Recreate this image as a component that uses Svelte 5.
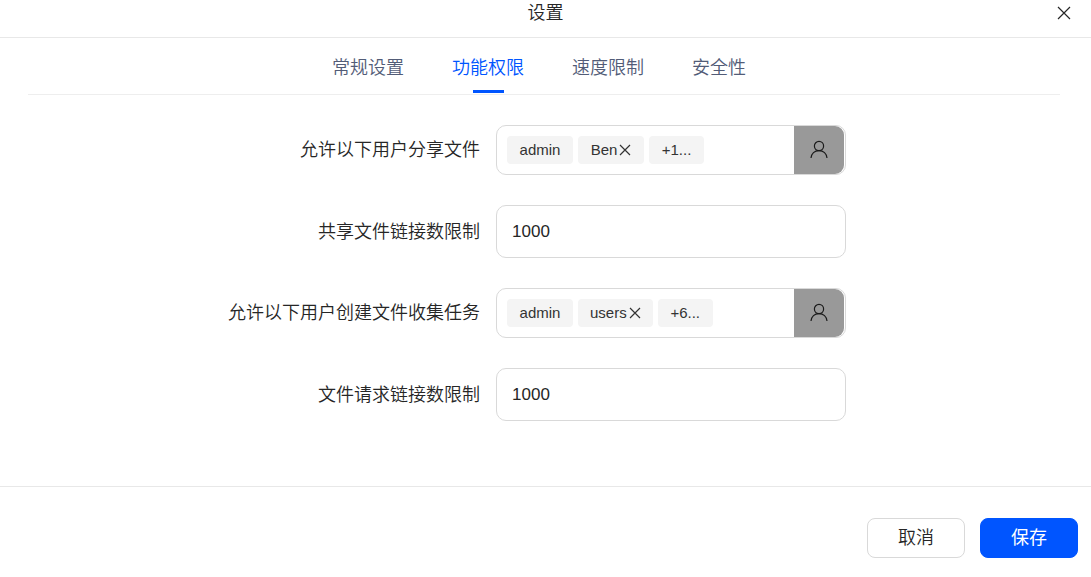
<script>
  let tabs = ['常规设置', '功能权限', '速度限制', '安全性'];
  let active = $state(1);

  let rows = $state([
    { id: 'share-users', label: '允许以下用户分享文件', tags: ['admin', 'Ben'], more: '+1...' },
    { id: 'share-limit', label: '共享文件链接数限制', value: '1000' },
    { id: 'collect-users', label: '允许以下用户创建文件收集任务', tags: ['admin', 'users'], more: '+6...' },
    { id: 'request-limit', label: '文件请求链接数限制', value: '1000' }
  ]);

  function removeTag(row, tag) {
    row.tags = row.tags.filter((t) => t !== tag);
  }
</script>

<div class="dialog" role="dialog" aria-labelledby="title">
  <header>
    <h1 id="title">设置</h1>
    <button class="close" type="button" aria-label="关闭">
      <svg width="14" height="14" viewBox="0 0 14 14"><path d="M1 1l12 12M13 1L1 13" /></svg>
    </button>
  </header>

  <div class="tabs" role="tablist">
    {#each tabs as tab, i}
      <button
        type="button"
        role="tab"
        class="tab"
        class:active={active === i}
        aria-selected={active === i}
        onclick={() => (active = i)}>{tab}</button>
    {/each}
  </div>

  <form id="settings">
    {#each rows as row}
      <div class="row">
        {#if row.tags}
          <span class="label" id={row.id}>{row.label}</span>
          <div class="picker" role="group" aria-labelledby={row.id}>
            <div class="tags">
              {#each row.tags as tag}
                <span class="tag">
                  {tag}{#if tag !== 'admin'}<button
                      type="button"
                      class="remove"
                      aria-label="移除 {tag}"
                      onclick={() => removeTag(row, tag)}>
                      <svg width="12" height="12" viewBox="0 0 12 12"><path d="M1 1l10 10M11 1L1 11" /></svg>
                    </button>{/if}
                </span>
              {/each}
              <span class="tag more">{row.more}</span>
            </div>
            <button type="button" class="choose" aria-label="选择用户">
              <svg width="20" height="20" viewBox="0 0 20 20">
                <circle cx="10" cy="6" r="4.6" />
                <path d="M2 18c.3-4.400 3.600-7.400 8-7.400s7.700 3 8 7.400" />
              </svg>
            </button>
          </div>
        {:else}
          <label class="label" for={row.id}>{row.label}</label>
          <input id={row.id} type="text" bind:value={row.value} />
        {/if}
      </div>
    {/each}
  </form>

  <footer>
    <button type="button" class="btn">取消</button>
    <button type="submit" form="settings" class="btn primary">保存</button>
  </footer>
</div>

<style>
  :global(body) {
    margin: 0;
    background: #fff;
  }

  .dialog {
    font-family: 'Liberation Sans', 'Noto Sans CJK SC', sans-serif;
    font-size: 18px;
    font-weight: 350;
    line-height: 24px;
    color: #262626;
  }

  button,
  input {
    box-sizing: border-box;
    margin: 0;
    font: inherit;
    color: inherit;
  }

  button {
    padding: 0;
    border: none;
    background: none;
    cursor: pointer;
  }

  svg {
    display: block;
    fill: none;
    stroke: currentColor;
    stroke-width: 1.2;
  }

  header {
    display: grid;
    grid-template-columns: 1fr auto 1fr;
    align-items: center;
    padding: 1px 20px 12px;
    border-bottom: 1px solid #e8e8e8;
  }

  h1 {
    grid-column: 2;
    margin: 0;
    font-size: 18px;
    font-weight: inherit;
  }

  .close {
    justify-self: end;
  }

  .tabs {
    display: flex;
    justify-content: center;
    gap: 48px;
    margin: 0 31px 0 28px;
    padding-right: 10px;
    border-bottom: 1px solid #eee;
  }

  .tab {
    position: relative;
    height: 56px;
    padding-top: 4px;
    color: #525c77;
  }

  .tab.active {
    color: #0055ff;
  }

  .tab.active::after {
    content: '';
    position: absolute;
    bottom: 1px;
    left: 0;
    right: 0;
    width: 31px;
    height: 3px;
    margin: 0 auto;
    background: #0055ff;
  }

  form {
    display: flex;
    flex-direction: column;
    gap: 30px;
    padding: 30px 0 65px;
  }

  .row {
    display: flex;
    align-items: center;
    gap: 16px;
  }

  .label {
    width: 44%;
    text-align: right;
  }

  .picker,
  input {
    box-sizing: border-box;
    width: 350px;
    border: 1px solid #d9d9d9;
    border-radius: 10px;
    background: #fff;
  }

  input {
    height: 53px;
    padding: 0 15px;
    font-size: 17px;
    font-weight: 400;
  }

  .picker {
    display: flex;
    height: 50px;
    padding-right: 1px;
  }

  .tags {
    display: flex;
    flex: 1;
    align-items: center;
    gap: 5px;
    padding-left: 10px;
  }

  .tag {
    box-sizing: border-box;
    display: flex;
    align-items: center;
    justify-content: center;
    min-width: 66px;
    height: 28px;
    padding: 0 12px;
    border-radius: 4px;
    background: #f4f4f4;
    font-size: 15px;
    color: #333;
  }

  .tag.more {
    min-width: 55px;
  }

  .remove {
    margin-left: 2px;
  }

  .choose {
    display: flex;
    align-items: center;
    justify-content: center;
    width: 50px;
    border-radius: 0 9px 9px 0;
    background: #999;
    color: #1a1a1a;
  }

  footer {
    display: flex;
    justify-content: flex-end;
    gap: 15px;
    padding: 31px 13px 19px;
    border-top: 1px solid #e8e8e8;
  }

  .btn {
    width: 98px;
    height: 40px;
    border: 1px solid #d9d9d9;
    border-radius: 8px;
  }

  .primary {
    border-color: #0055ff;
    background: #0055ff;
    color: #fff;
    font-weight: 400;
  }
</style>
